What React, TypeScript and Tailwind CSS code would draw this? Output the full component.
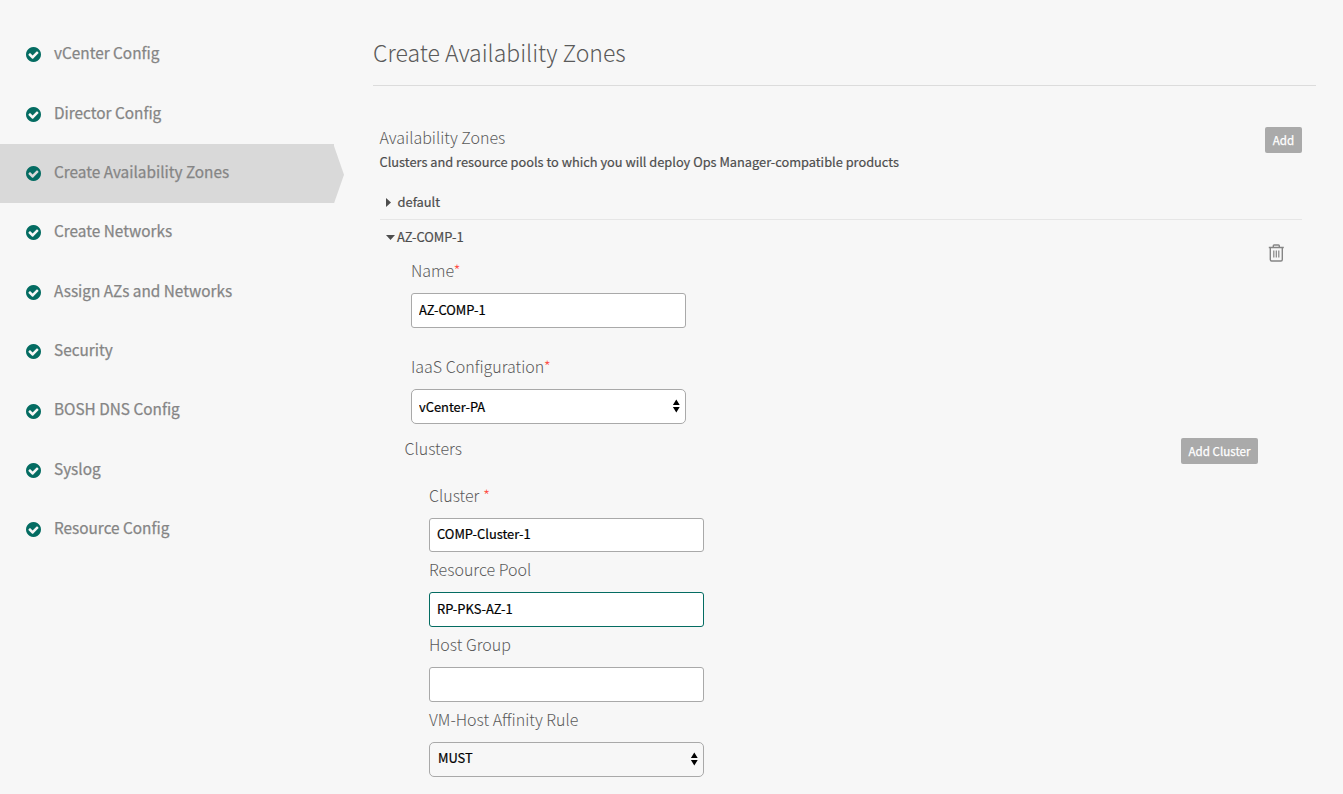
import type { ReactNode } from "react";

const steps = [
  "vCenter Config",
  "Director Config",
  "Create Availability Zones",
  "Create Networks",
  "Assign AZs and Networks",
  "Security",
  "BOSH DNS Config",
  "Syslog",
  "Resource Config",
];

function CheckCircle() {
  return (
    <svg viewBox="128 128 1536 1536" className="-mt-[0.3px] size-[15px] shrink-0 fill-[#046c62]">
      <path d="M1412 734q0-28-18-46l-91-90q-19-19-45-19t-45 19l-408 407-226-226q-19-19-45-19t-45 19l-91 90q-18 18-18 46 0 27 18 45l362 362q19 19 45 19 27 0 46-19l543-543q18-18 18-45zm252 162q0 209-103 385.5t-279.5 279.5-385.5 103-385.5-103-279.5-279.5-103-385.5 103-385.5 279.5-279.5 385.5-103 385.5 103 279.5 279.5 103 385.5z" />
    </svg>
  );
}

function Trash() {
  return (
    <svg viewBox="0 0 16 18" fill="none" className="h-[18px] w-4 stroke-[#858585]">
      <path d="M0.8 3.5h15M5.3 3V1.8Q5.3 1 6.1 1h4.4Q11.3 1 11.3 1.8V3M2.3 3.5v12Q2.3 17 3.6 17h9.4q1.3 0 1.3-1.5v-12" strokeWidth="1.4" />
      <path d="M5.8 6.5v7M8.3 6.5v7M10.8 6.5v7" strokeWidth="1.2" />
    </svg>
  );
}

function Label({ children, required }: { children: ReactNode; required?: boolean }) {
  return (
    <div className="h-6 whitespace-pre text-[16px] leading-6 font-light text-[#5a5a5a]">
      {children}
      {required && <span className="text-[#ff4b42]">*</span>}
    </div>
  );
}

function TextInput({ value, focused, short, name }: { value: string; focused?: boolean; short?: boolean; name: string }) {
  return (
    <input
      aria-label={name}
      defaultValue={value}
      className={`block w-[275px] rounded-[3px] border bg-white px-[7px] text-[12.9px] text-black outline-none [-webkit-text-stroke:0.2px] ${
        focused ? "border-[#046c62]" : "border-[#a9a9a9]"
      } ${short ? "h-[34px] pb-[3px]" : "h-[35px] pb-[2px]"}`}
    />
  );
}

function Select({ value, plain, name }: { value: string; plain?: boolean; name: string }) {
  return (
    <div className="relative h-[35px] w-[275px]">
      <select
        aria-label={name}
        className={`block size-full appearance-none rounded-[5px] border border-[#a9a9a9] text-[12.9px] text-black outline-none [-webkit-text-stroke:0.2px] ${
          plain ? "bg-[#f7f7f7] px-[8px] pb-[3px]" : "bg-white px-[7px]"
        }`}
      >
        <option>{value}</option>
      </select>
      <svg viewBox="0 0 8 14" className="absolute top-[10px] right-[6px] h-[14px] w-2 fill-black">
        <path d="M4.3 0.5l3.4 5.5h-6.8zM4.3 13.5l3.4-5.5h-6.8z" />
      </svg>
    </div>
  );
}

function SmallButton({ children, width }: { children: ReactNode; width: string }) {
  return (
    <button className={`block h-[26px] shrink-0 rounded-[2px] bg-[#aaaaaa] text-[11.6px] leading-[26px] text-white [-webkit-text-stroke:0.25px] ${width}`}>
      {children}
    </button>
  );
}

export default function App() {
  return (
    <div className="flex h-[794px] w-[1343px] overflow-hidden bg-[#f7f7f7] font-['Noto_Sans_CJK_SC',sans-serif] text-[#4d4d4d]">
      <nav className="w-[344px] shrink-0 pt-[25.25px]">
        {steps.map((step) => {
          const active = step === "Create Availability Zones";
          return (
            <div key={step} className="flex h-[59.375px]">
              <div className={`flex w-[334px] items-center gap-[12.7px] pl-[26.3px] ${active ? "bg-[#d9d9d9]" : ""}`}>
                <CheckCircle />
                <span className="pb-[5.4px] text-[15.35px] leading-6 whitespace-nowrap text-[#858585] [-webkit-text-stroke:0.25px]">
                  {step}
                </span>
              </div>
              {active && (
                <svg viewBox="0 0 10 59" preserveAspectRatio="none" className="h-full w-[10px] fill-[#d9d9d9]">
                  <path d="M0 2l10 28.5L0 59z" />
                </svg>
              )}
            </div>
          );
        })}
      </nav>
      <main className="ml-[29px] w-[943px]">
        <h1 className="h-[86px] border-b border-[#dcdcdc] pt-[32px] text-[23px] leading-10 font-light text-[#5a5a5a]">
          Create Availability Zones
        </h1>
        <section className="mr-[14px] ml-[6.5px]">
          <header className="flex h-[99px] justify-between pt-[41px]">
            <div className="-mt-[2px]">
              <h2 className="text-[16px] leading-6 font-light text-[#5a5a5a]">Availability Zones</h2>
              <p className="mt-px text-[12.8px] leading-6 [-webkit-text-stroke:0.2px]">
                Clusters and resource pools to which you will deploy Ops Manager-compatible products
              </p>
            </div>
            <SmallButton width="w-[37px]">Add</SmallButton>
          </header>
          <div className="flex h-[35px] items-center gap-[6.5px] border-b border-[#e6e6e6] pl-[6.5px]">
            <svg viewBox="0 0 5 9" className="h-[9px] w-[5px] fill-[#4d4d4d]">
              <path d="M0 0l5 4.5L0 9z" />
            </svg>
            <span className="text-[12.9px] leading-6 [-webkit-text-stroke:0.2px]">default</span>
          </div>
          <div className="flex justify-between">
            <div>
              <div className="flex h-[38px] items-center gap-[2px] pb-[4px] pl-[6.5px]">
                <svg viewBox="0 0 9 5" className="h-[5px] w-[9px] fill-[#4d4d4d]">
                  <path d="M0 0h9L4.5 5z" />
                </svg>
                <span className="text-[12.9px] leading-6 [-webkit-text-stroke:0.2px]">AZ-COMP-1</span>
              </div>
              <div className="ml-[31.5px]">
                <Label required>Name</Label>
                <div className="mt-[11px]">
                  <TextInput name="Name" value="AZ-COMP-1" />
                </div>
                <div className="mt-[26px]">
                  <Label required>IaaS Configuration</Label>
                </div>
                <div className="mt-[11px]">
                  <Select name="IaaS Configuration" value="vCenter-PA" />
                </div>
              </div>
            </div>
            <div className="mt-[24px] mr-[18px]">
              <Trash />
            </div>
          </div>
          <div className="mt-[12px] mr-[44px] ml-[25px] flex h-[27px] justify-between">
            <Label>Clusters</Label>
            <div className="mt-[2px]">
              <SmallButton width="w-[77px] pb-px">Add Cluster</SmallButton>
            </div>
          </div>
          <div className="mt-[20px] ml-[49.5px]">
            <Label required>{"Cluster "}</Label>
            <div className="mt-[11px] mb-[5px]">
              <TextInput name="Cluster" value="COMP-Cluster-1" short />
            </div>
            <Label>Resource Pool</Label>
            <div className="mt-[11px] mb-[5px]">
              <TextInput name="Resource Pool" value="RP-PKS-AZ-1" focused />
            </div>
            <Label>Host Group</Label>
            <div className="mt-[11px] mb-[5px]">
              <TextInput name="Host Group" value="" />
            </div>
            <Label>VM-Host Affinity Rule</Label>
            <div className="mt-[11px]">
              <Select name="VM-Host Affinity Rule" value="MUST" plain />
            </div>
          </div>
        </section>
      </main>
    </div>
  );
}
